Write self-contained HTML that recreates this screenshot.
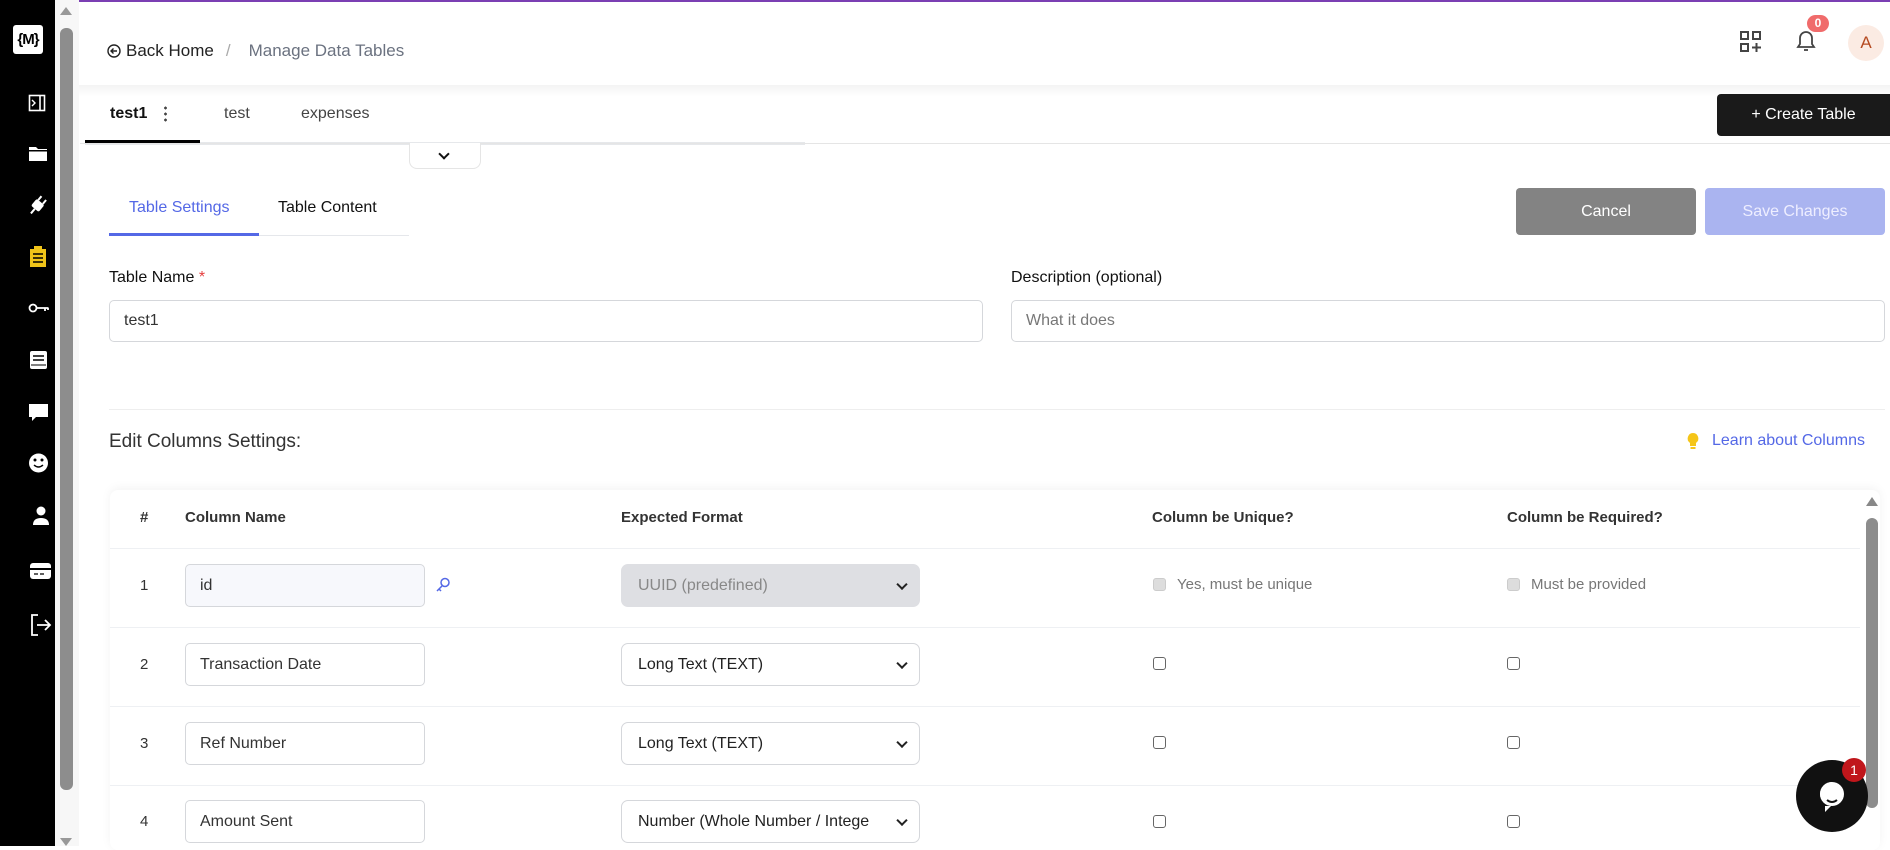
<!DOCTYPE html>
<html><head><meta charset="utf-8"><style>
*{box-sizing:border-box;margin:0;padding:0}
body{width:1890px;height:846px;overflow:hidden;background:#fff;font-family:"Liberation Sans",sans-serif;color:#222;position:relative}
.abs{position:absolute}
.side{left:0;top:0;width:55px;height:846px;background:#000}
.sb{left:55px;top:0;width:24px;height:846px;background:#f7f7f7}
.inp{position:absolute;border:1px solid #d5d7db;border-radius:5px;background:#fff;font-size:16px;color:#333;padding-left:14px;display:flex;align-items:center}
.sel{position:absolute;border:1px solid #d5d7db;border-radius:7px;background:#fff;font-size:16px;color:#222;padding-left:16px;display:flex;align-items:center}
.sel:after{content:"";position:absolute;right:13px;top:50%;width:6px;height:6px;border-right:2px solid #222;border-bottom:2px solid #222;transform:translateY(-70%) rotate(45deg)}
.cb{position:absolute;width:13px;height:13px;border:1.5px solid #666;border-radius:3px}
.th{position:absolute;top:509px;font-size:15px;font-weight:bold;color:#333}
.rl{position:absolute;left:110px;width:1750px;height:1px;background:#eef0f3}
.num{position:absolute;left:140px;font-size:15px;color:#333}
</style></head><body>
<div class="abs" style="left:55px;top:0;width:1835px;height:2px;background:#7b3fb3"></div>
<div class="abs side"></div>
<div class="abs" style="left:13px;top:25px;width:30px;height:29px;background:#fff;border-radius:3px;font-size:15px;font-weight:bold;color:#000;text-align:center;line-height:29px;letter-spacing:-1px">{M}</div>
<svg class="abs" style="left:0;top:0" width="55" height="846" fill="#fff" stroke="#fff">
<rect x="29.5" y="95.5" width="15" height="15" fill="none" stroke-width="1.6"/><line x1="40" y1="96" x2="40" y2="110" stroke-width="1.6"/><path d="M32 100l3 3-3 3" fill="none" stroke-width="1.4"/>
<path d="M29 147h7l2 2h9v12H29z" stroke="none"/><rect x="29" y="150" width="18" height="1.5" fill="#000" stroke="none"/>
<g transform="rotate(40 38 205)"><rect x="33" y="201" width="10" height="9" rx="2" stroke="none"/><path d="M35 201v-5M41 201v-5M38 210v6" stroke-width="2"/></g>
<rect x="30" y="249" width="16" height="18" fill="#f0c419" stroke="none"/><path d="M33 254h10M33 258h10M33 262h10" stroke="#000" stroke-width="1.5"/><rect x="34" y="246" width="8" height="4" fill="#f0c419" stroke="none"/>
<circle cx="33" cy="308" r="3.5" fill="none" stroke-width="1.8"/><path d="M36.5 308h12M45 308v3M48 308v2" stroke-width="1.8"/>
<rect x="30" y="351" width="17" height="18" rx="2" stroke="none"/><path d="M33 356h11M33 360h11" stroke="#000" stroke-width="1.5"/><path d="M31 365h15" stroke="#000" stroke-width="1"/>
<path d="M29 404h19v13H36l-4 4v-4h-3z" stroke="none"/>
<circle cx="38.5" cy="463" r="9.5" stroke="none"/><circle cx="35" cy="460" r="1.5" fill="#000" stroke="none"/><circle cx="42" cy="460" r="1.5" fill="#000" stroke="none"/><path d="M34 465q4.5 4 9 0" fill="none" stroke="#000" stroke-width="1.5"/>
<circle cx="41" cy="511" r="4.5" stroke="none"/><path d="M33 525q0-7 8-7t8 7z" stroke="none"/>
<rect x="30" y="563" width="21" height="16" rx="3" stroke="none"/><rect x="30" y="568" width="21" height="2" fill="#000" stroke="none"/><path d="M34 574h4M40 574h4" stroke="#000" stroke-width="1.2"/>
<path d="M38 615h-6v20h6" fill="none" stroke-width="1.8"/><path d="M37 625h13M45 620l5 5-5 5" fill="none" stroke-width="1.8"/>
</svg>
<div class="abs sb"></div>
<div class="abs" style="left:60px;top:28px;width:13px;height:762px;background:#8d8d8d;border-radius:6px"></div>
<div class="abs" style="left:60px;top:7px;width:0;height:0;border-left:6.5px solid transparent;border-right:6.5px solid transparent;border-bottom:8px solid #999"></div>
<div class="abs" style="left:60px;top:838px;width:0;height:0;border-left:6.5px solid transparent;border-right:6.5px solid transparent;border-top:8px solid #999"></div>

<div class="abs" style="left:107px;top:41px;font-size:17px;color:#222;display:flex;align-items:center"><svg width="14" height="14" style="margin-right:5px"><circle cx="7" cy="7" r="6" fill="none" stroke="#222" stroke-width="1.4"/><path d="M10 7H4M6.5 4.5L4 7l2.5 2.5" fill="none" stroke="#222" stroke-width="1.4"/></svg>Back Home<span style="color:#aaa;margin:0 18px 0 12px">/</span><span style="color:#6b7280">Manage Data Tables</span></div>
<svg class="abs" style="left:1740px;top:31px" width="22" height="22" fill="none" stroke="#444" stroke-width="2"><rect x="1" y="1" width="7" height="7"/><rect x="13" y="1" width="7" height="7"/><rect x="1" y="13" width="7" height="7"/><path d="M16.5 12v9M12 16.5h9"/></svg>
<svg class="abs" style="left:1794px;top:28px" width="24" height="26" fill="none" stroke="#444" stroke-width="1.8"><path d="M4 19h16l-2-3v-6a6 6 0 0 0-12 0v6z"/><path d="M10 22h4"/></svg>
<div class="abs" style="left:1807px;top:15px;width:22px;height:17px;background:#f06b6b;border-radius:9px;color:#fff;font-size:12px;font-weight:bold;text-align:center;line-height:17px">0</div>
<div class="abs" style="left:1848px;top:25px;width:36px;height:36px;border-radius:50%;background:#fbebe3;color:#b54b22;font-size:17px;text-align:center;line-height:36px">A</div>

<div class="abs" style="left:79px;top:85px;width:1811px;height:12px;background:linear-gradient(#f3f3f3,#fff)"></div>
<div class="abs" style="left:110px;top:105px;font-size:16px;font-weight:bold;color:#111">test1</div>
<div class="abs" style="left:164px;top:105px;width:3px;height:18px;background:radial-gradient(circle,#444 1.3px,transparent 1.5px) 0 0/3px 6px"></div>
<div class="abs" style="left:224px;top:105px;font-size:16px;color:#444">test</div>
<div class="abs" style="left:301px;top:105px;font-size:16px;color:#444">expenses</div>
<div class="abs" style="left:85px;top:142px;width:720px;height:3px;background:#e6e8eb"></div>
<div class="abs" style="left:85px;top:140px;width:115px;height:4px;background:#000"></div>
<div class="abs" style="left:80px;top:143px;width:1810px;height:1px;background:#e5e5e5"></div>
<div class="abs" style="left:409px;top:143px;width:72px;height:26px;background:#fff;border:1px solid #e5e5e5;border-top:none;border-radius:0 0 8px 8px"></div>
<div class="abs" style="left:440px;top:150px;width:8px;height:8px;border-right:2px solid #111;border-bottom:2px solid #111;transform:rotate(45deg)"></div>
<div class="abs" style="left:1717px;top:94px;width:173px;height:42px;background:#1a1a1a;border-radius:4px 0 0 4px;color:#fff;font-size:16px;text-align:center;line-height:42px">+ Create Table</div>

<div class="abs" style="left:129px;top:199px;font-size:16px;color:#5468e6">Table Settings</div>
<div class="abs" style="left:278px;top:199px;font-size:16px;color:#111">Table Content</div>
<div class="abs" style="left:109px;top:235px;width:300px;height:1px;background:#e5e7eb"></div>
<div class="abs" style="left:109px;top:233px;width:150px;height:3px;background:#5468e6"></div>
<div class="abs" style="left:1516px;top:188px;width:180px;height:47px;background:#838383;border-radius:4px;color:#fff;font-size:16px;text-align:center;line-height:47px">Cancel</div>
<div class="abs" style="left:1705px;top:188px;width:180px;height:47px;background:#aab4f0;border-radius:4px;color:#eef;font-size:16px;text-align:center;line-height:47px">Save Changes</div>

<div class="abs" style="left:109px;top:269px;font-size:16px;color:#111">Table Name <span style="color:#e53e3e">*</span></div>
<div class="abs" style="left:1011px;top:269px;font-size:16px;color:#111">Description (optional)</div>
<div class="inp" style="left:109px;top:300px;width:874px;height:42px">test1</div>
<div class="inp" style="left:1011px;top:300px;width:874px;height:42px;color:#777">What it does</div>
<div class="abs" style="left:109px;top:409px;width:1776px;height:1px;background:#eee"></div>
<div class="abs" style="left:109px;top:431px;font-size:19px;color:#333">Edit Columns Settings:</div>
<div class="abs" style="left:1686px;top:432px;font-size:16px;color:#5468e6;display:flex;align-items:center"><svg width="14" height="18" style="margin-right:12px"><path d="M7 1a5.5 5.5 0 0 0-3 10v3h6v-3A5.5 5.5 0 0 0 7 1z" fill="#f5c518"/><rect x="4.5" y="15" width="5" height="2" fill="#f5c518"/></svg>Learn about Columns</div>

<div class="abs" style="left:110px;top:490px;width:1770px;height:360px;background:#fff;border-radius:8px;box-shadow:0 -2px 10px rgba(0,0,0,.05)"></div>
<div class="th" style="left:140px">#</div>
<div class="th" style="left:185px">Column Name</div>
<div class="th" style="left:621px">Expected Format</div>
<div class="th" style="left:1152px">Column be Unique?</div>
<div class="th" style="left:1507px">Column be Required?</div>
<div class="rl" style="top:548px"></div>
<div class="rl" style="top:627px"></div>
<div class="rl" style="top:706px"></div>
<div class="rl" style="top:785px"></div>

<div class="num" style="top:577px">1</div>
<div class="inp" style="left:185px;top:564px;width:240px;height:43px;background:#f7f8fc">id</div>
<svg class="abs" style="left:435px;top:577px" width="16" height="16" fill="none" stroke="#5468e6" stroke-width="1.5"><circle cx="10" cy="5.5" r="4"/><path d="M7 9l-5 5M4 12l2 2"/></svg>
<div class="sel" style="left:621px;top:564px;width:299px;height:43px;background:#dedfe3;color:#888;border-color:#dedfe3">UUID (predefined)</div>
<div class="cb" style="left:1153px;top:578px;background:#ddd;border-color:#ccc"></div>
<div class="abs" style="left:1177px;top:576px;font-size:15px;color:#777">Yes, must be unique</div>
<div class="cb" style="left:1507px;top:578px;background:#ddd;border-color:#ccc"></div>
<div class="abs" style="left:1531px;top:576px;font-size:15px;color:#777">Must be provided</div>

<div class="num" style="top:656px">2</div>
<div class="inp" style="left:185px;top:643px;width:240px;height:43px">Transaction Date</div>
<div class="sel" style="left:621px;top:643px;width:299px;height:43px">Long Text (TEXT)</div>
<div class="cb" style="left:1153px;top:657px"></div><div class="cb" style="left:1507px;top:657px"></div>

<div class="num" style="top:735px">3</div>
<div class="inp" style="left:185px;top:722px;width:240px;height:43px">Ref Number</div>
<div class="sel" style="left:621px;top:722px;width:299px;height:43px">Long Text (TEXT)</div>
<div class="cb" style="left:1153px;top:736px"></div><div class="cb" style="left:1507px;top:736px"></div>

<div class="num" style="top:813px">4</div>
<div class="inp" style="left:185px;top:800px;width:240px;height:43px">Amount Sent</div>
<div class="sel" style="left:621px;top:800px;width:299px;height:43px;overflow:hidden;white-space:nowrap"><span style="overflow:hidden;display:block;width:232px">Number (Whole Number / Integer)</span></div>
<div class="cb" style="left:1153px;top:815px"></div><div class="cb" style="left:1507px;top:815px"></div>

<div class="abs" style="left:1866px;top:497px;width:0;height:0;border-left:6px solid transparent;border-right:6px solid transparent;border-bottom:9px solid #888"></div>
<div class="abs" style="left:1866px;top:518px;width:12px;height:290px;background:#8d8d8d;border-radius:6px"></div>
<div class="abs" style="left:1796px;top:760px;width:72px;height:72px;border-radius:50%;background:#111"></div>
<svg class="abs" style="left:1812px;top:776px" width="40" height="40"><path d="M20 6a12 12 0 1 0 0 24h-7v6l6-6" fill="#fff"/><circle cx="20" cy="18" r="12" fill="#fff"/><path d="M15 24q5 4 10 0" stroke="#111" stroke-width="2" fill="none"/></svg>
<div class="abs" style="left:1842px;top:758px;width:24px;height:24px;border-radius:50%;background:#c0161b;color:#fff;font-size:14px;text-align:center;line-height:24px">1</div>
</body></html>
